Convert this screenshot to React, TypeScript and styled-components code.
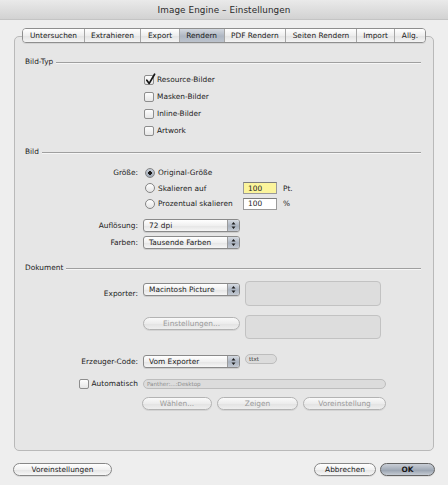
import styled, { createGlobalStyle } from "styled-components";

const GlobalStyle = createGlobalStyle`
  html, body {
    margin: 0;
    padding: 0;
    background: #ececec;
  }
  body {
    font-family: "DejaVu Sans", "Liberation Sans", sans-serif;
    font-size: 7.4px;
    color: #1c1c1c;
  }
`;

const Window = styled.div`
  width: 448px;
  height: 485px;
  display: flex;
  flex-direction: column;
  background: #eeeeee;
  overflow: hidden;
`;

const TitleBar = styled.div`
  height: 20px;
  flex: none;
  display: flex;
  align-items: center;
  justify-content: center;
  background: linear-gradient(#eaeaea, #d2d2d2);
  border-bottom: 1px solid #c4c4c4;
  box-sizing: border-box;
  font-size: 8.8px;
  color: #2a2a2a;
  letter-spacing: 0.1px;
`;

const Body = styled.div`
  display: flex;
  flex-direction: column;
  padding: 8px 14px 0 14px;
`;

const TabStrip = styled.div`
  position: relative;
  z-index: 1;
  align-self: center;
  display: flex;
  height: 13px;
  margin-bottom: -7px;
  border: 1px solid #8e8e8e;
  border-radius: 4px;
  overflow: hidden;
  box-shadow: 0 1px 0 rgba(0, 0, 0, 0.08);
`;

const Tab = styled.div<{ $active?: boolean }>`
  display: flex;
  align-items: center;
  padding: 0 6.5px;
  background: ${(p) =>
    p.$active
      ? "linear-gradient(#d3d8df, #aeb6c2 55%, #bcc3cd)"
      : "linear-gradient(#ffffff, #eeeeee 50%, #e2e2e2 51%, #f4f4f4)"};
  border-left: 1px solid #a6a6a6;
  color: #1a1a1a;

  &:first-child {
    border-left: none;
  }
`;

const Panel = styled.div`
  height: 415px;
  box-sizing: border-box;
  background: #e6e6e6;
  border: 1px solid #b9b9b9;
  border-radius: 5px;
  padding: 19px 12px 0 10px;
  display: flex;
  flex-direction: column;
`;

const SectionHeader = styled.div<{ $top?: number }>`
  display: flex;
  align-items: center;
  height: 10px;
  gap: 3px;
  margin-top: ${(p) => p.$top ?? 0}px;

  &::after {
    content: "";
    flex: 1;
    height: 0;
    margin-top: 3px;
    border-top: 1px solid #9f9f9f;
    border-bottom: 1px solid #f6f6f6;
  }
`;

const CheckList = styled.div`
  display: flex;
  flex-direction: column;
  margin: 5px 0 0 119px;
`;

const CheckRow = styled.label`
  display: flex;
  align-items: center;
  gap: 3px;
  height: 17px;
`;

const Box = styled.span`
  position: relative;
  width: 10px;
  height: 10px;
  box-sizing: border-box;
  border: 1px solid #8d8d8d;
  border-radius: 2px;
  background: linear-gradient(#fdfdfd, #e6e6e6);
  flex: none;

  svg {
    position: absolute;
    left: 0px;
    top: -3px;
  }
`;

const FormRow = styled.div<{ $top?: number; $h: number }>`
  display: grid;
  grid-template-columns: 113px 1fr;
  column-gap: 5px;
  align-items: center;
  height: ${(p) => p.$h}px;
  margin-top: ${(p) => p.$top ?? 0}px;
`;

const Label = styled.span`
  text-align: right;
  white-space: nowrap;
`;

const LabelCell = styled.div`
  display: flex;
  align-items: center;
  justify-content: flex-end;
  gap: 3px;
`;

const RadioLine = styled.div`
  display: grid;
  grid-template-columns: 92px 34px auto;
  column-gap: 6px;
  align-items: center;
  padding-left: 2px;
`;

const RadioLabel = styled.span`
  display: flex;
  align-items: center;
  gap: 3px;
  white-space: nowrap;
`;

const Radio = styled.span<{ $checked?: boolean }>`
  width: 10px;
  height: 10px;
  box-sizing: border-box;
  border-radius: 50%;
  border: 1px solid #858585;
  background: ${(p) =>
    p.$checked
      ? "radial-gradient(circle, #1a1a1a 0 1.6px, transparent 2px), linear-gradient(#c5ccd6, #9ea8b6)"
      : "linear-gradient(#ffffff, #e4e4e4)"};
  flex: none;
`;

const TextField = styled.div<{ $highlight?: boolean }>`
  height: 12px;
  box-sizing: border-box;
  border: 1px solid #9a9a9a;
  border-top-color: #7c7c7c;
  background: ${(p) => (p.$highlight ? "#fbf49c" : "#ffffff")};
  padding: 0 4px;
  display: flex;
  align-items: center;
`;

const PopupBox = styled.div`
  width: 97px;
  height: 13px;
  box-sizing: border-box;
  border: 1px solid #8a8a8a;
  border-radius: 3px;
  background: linear-gradient(#ffffff, #f0f0f0 50%, #e4e4e4 51%, #f6f6f6);
  display: flex;
  align-items: stretch;
  overflow: hidden;
  box-shadow: 0 1px 0 rgba(0, 0, 0, 0.1);
`;

const PopupText = styled.span`
  flex: 1;
  display: flex;
  align-items: center;
  padding-left: 5px;
  white-space: nowrap;
`;

const PopupArrow = styled.span`
  width: 11px;
  display: flex;
  align-items: center;
  justify-content: center;
  background: linear-gradient(#d6dbe2, #a9b2bf 55%, #c3c9d2);
  border-left: 1px solid #9b9b9b;
`;

const InfoBox = styled.div<{ $h: number }>`
  width: 136px;
  height: ${(p) => p.$h}px;
  box-sizing: border-box;
  border: 1px solid #c2c2c2;
  border-radius: 4px;
  background: #dddddd;
  align-self: start;
`;

const ControlLine = styled.div`
  display: flex;
  align-items: flex-start;
  gap: 5px;
  height: 100%;
`;

const Nudge = styled.div<{ $y: number }>`
  margin-top: ${(p) => p.$y}px;
`;

const SmallField = styled.div<{ $w: number; $faint?: boolean }>`
  width: ${(p) => p.$w}px;
  height: 10px;
  box-sizing: border-box;
  border: 1px solid #bdbdbd;
  border-radius: 5px;
  background: #dcdcdc;
  display: flex;
  align-items: center;
  padding: 0 3px;
  font-size: 5.6px;
  color: ${(p) => (p.$faint ? "#8c8c8c" : "#3a3a3a")};
  white-space: nowrap;
`;

const Button = styled.div<{ $w: number; $disabled?: boolean; $default?: boolean }>`
  width: ${(p) => p.$w}px;
  height: 13px;
  box-sizing: border-box;
  border-radius: 7px;
  border: 1px solid ${(p) => (p.$disabled ? "#b3b3b3" : p.$default ? "#626262" : "#878787")};
  background: ${(p) =>
    p.$default
      ? "linear-gradient(#c9ced6, #a4adb9 50%, #959fad 51%, #c5cbd3)"
      : p.$disabled
      ? "linear-gradient(#fafafa, #ececec 50%, #e2e2e2 51%, #eeeeee)"
      : "linear-gradient(#ffffff, #f1f1f1 50%, #e3e3e3 51%, #f7f7f7)"};
  color: ${(p) => (p.$disabled ? "#9a9a9a" : "#1a1a1a")};
  font-weight: ${(p) => (p.$default ? "bold" : "normal")};
  display: flex;
  align-items: center;
  justify-content: center;
  white-space: nowrap;
  box-shadow: 0 1px 0 rgba(0, 0, 0, 0.08);
`;

const ButtonLine = styled.div`
  display: flex;
  gap: 5px;
  margin-left: -1px;
`;

const Footer = styled.div`
  display: flex;
  align-items: center;
  margin: 12px -1px 0 -1px;
`;

const Spacer = styled.div`
  flex: 1;
`;

const FooterRight = styled.div`
  display: flex;
  gap: 4px;
`;

function Check({ checked }: { checked?: boolean }) {
  return (
    <Box>
      {checked && (
        <svg width="12" height="13" viewBox="0 0 12 13">
          <path d="M1.8 7.2 L4.2 10.4 L9.6 1.2" fill="none" stroke="#151515" strokeWidth="1.7" strokeLinecap="round" strokeLinejoin="round" />
        </svg>
      )}
    </Box>
  );
}

function Popup({ value }: { value: string }) {
  return (
    <PopupBox>
      <PopupText>{value}</PopupText>
      <PopupArrow>
        <svg width="5" height="9" viewBox="0 0 5 9">
          <path d="M0.5 3.6 L2.5 1 L4.5 3.6 Z M0.5 5.4 L2.5 8 L4.5 5.4 Z" fill="#1e1e1e" />
        </svg>
      </PopupArrow>
    </PopupBox>
  );
}

const tabs = ["Untersuchen", "Extrahieren", "Export", "Rendern", "PDF Rendern", "Seiten Rendern", "Import", "Allg."];

const bildTypen = [
  { name: "Resource-Bilder", checked: true },
  { name: "Masken-Bilder" },
  { name: "Inline-Bilder" },
  { name: "Artwork" },
];

export default function App() {
  return (
    <>
      <GlobalStyle />
      <Window>
        <TitleBar>Image Engine – Einstellungen</TitleBar>
        <Body>
          <TabStrip>
            {tabs.map((t) => (
              <Tab key={t} $active={t === "Rendern"}>
                {t}
              </Tab>
            ))}
          </TabStrip>
          <Panel>
            <SectionHeader>Bild-Typ</SectionHeader>
            <CheckList>
              {bildTypen.map((b) => (
                <CheckRow key={b.name}>
                  <Check checked={b.checked} />
                  {b.name}
                </CheckRow>
              ))}
            </CheckList>

            <SectionHeader $top={7}>Bild</SectionHeader>
            <FormRow $top={9} $h={15.5}>
              <Label>Größe:</Label>
              <RadioLine>
                <RadioLabel>
                  <Radio $checked />
                  Original-Größe
                </RadioLabel>
              </RadioLine>
            </FormRow>
            <FormRow $h={15.5}>
              <span />
              <RadioLine>
                <RadioLabel>
                  <Radio />
                  Skalieren auf
                </RadioLabel>
                <TextField $highlight>100</TextField>
                <span>Pt.</span>
              </RadioLine>
            </FormRow>
            <FormRow $h={15.5}>
              <span />
              <RadioLine>
                <RadioLabel>
                  <Radio />
                  Prozentual skalieren
                </RadioLabel>
                <TextField>100</TextField>
                <span>%</span>
              </RadioLine>
            </FormRow>
            <FormRow $top={5.5} $h={17}>
              <Label>Auflösung:</Label>
              <Popup value="72 dpi" />
            </FormRow>
            <FormRow $h={17}>
              <Label>Farben:</Label>
              <Popup value="Tausende Farben" />
            </FormRow>

            <SectionHeader $top={11}>Dokument</SectionHeader>
            <FormRow $top={9} $h={25}>
              <Label>Exporter:</Label>
              <ControlLine>
                <Nudge $y={2}>
                  <Popup value="Macintosh Picture" />
                </Nudge>
                <InfoBox $h={25} />
              </ControlLine>
            </FormRow>
            <FormRow $top={9} $h={24}>
              <span />
              <ControlLine>
                <Nudge $y={2}>
                  <Button $w={97} $disabled>
                    Einstellungen...
                  </Button>
                </Nudge>
                <InfoBox $h={24} />
              </ControlLine>
            </FormRow>
            <FormRow $top={15} $h={14}>
              <Label>Erzeuger-Code:</Label>
              <ControlLine>
                <Nudge $y={1}>
                  <Popup value="Vom Exporter" />
                </Nudge>
                <SmallField $w={32}>ttxt</SmallField>
              </ControlLine>
            </FormRow>
            <FormRow $top={10} $h={11}>
              <LabelCell>
                <Check />
                <Label>Automatisch</Label>
              </LabelCell>
              <SmallField $w={243} $faint>
                Panther:...:Desktop
              </SmallField>
            </FormRow>
            <FormRow $top={8} $h={13}>
              <span />
              <ButtonLine>
                <Button $w={70} $disabled>
                  Wählen...
                </Button>
                <Button $w={81} $disabled>
                  Zeigen
                </Button>
                <Button $w={83} $disabled>
                  Voreinstellung
                </Button>
              </ButtonLine>
            </FormRow>
          </Panel>
          <Footer>
            <Button $w={99}>Voreinstellungen</Button>
            <Spacer />
            <FooterRight>
              <Button $w={62}>Abbrechen</Button>
              <Button $w={55} $default>
                OK
              </Button>
            </FooterRight>
          </Footer>
        </Body>
      </Window>
    </>
  );
}
